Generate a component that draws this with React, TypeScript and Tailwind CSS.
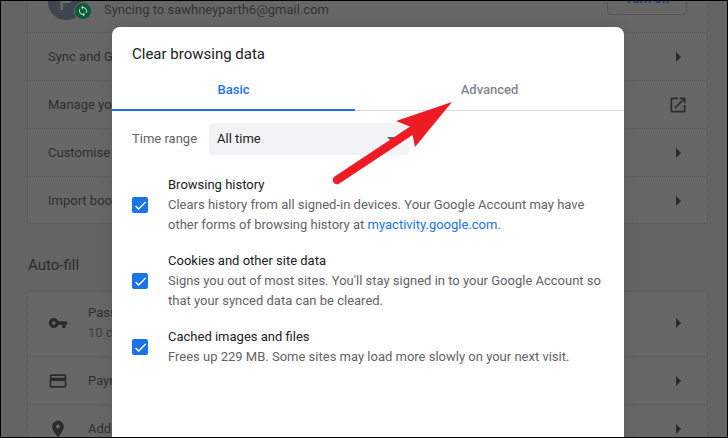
import React from "react";

const Icon = ({ d, className }: { d: string; className: string }) => (
  <svg viewBox="0 0 24 24" className={className} fill="currentColor">
    <path d={d} />
  </svg>
);

const paths = {
  key: "M12.65 10C11.83 7.67 9.61 6 7 6c-3.31 0-6 2.69-6 6s2.69 6 6 6c2.61 0 4.83-1.67 5.65-4H17v4h4v-4h2v-4H12.65zM7 14c-1.1 0-2-.9-2-2s.9-2 2-2 2 .9 2 2-.9 2-2 2z",
  card: "M20 4H4c-1.11 0-1.99.89-1.99 2L2 18c0 1.11.89 2 2 2h16c1.11 0 2-.89 2-2V6c0-1.11-.89-2-2-2zm0 14H4v-6h16v6zm0-10H4V6h16v2z",
  pin: "M12 2C8.13 2 5 5.13 5 9c0 5.25 7 13 7 13s7-7.75 7-13c0-3.87-3.13-7-7-7zm0 9.5c-1.38 0-2.5-1.12-2.5-2.5s1.12-2.5 2.5-2.5 2.5 1.12 2.5 2.5-1.12 2.5-2.5 2.5z",
  open: "M19 19H5V5h7V3H5c-1.11 0-2 .9-2 2v14c0 1.1.89 2 2 2h14c1.1 0 2-.9 2-2v-7h-2v7zM14 3v2h3.59l-9.83 9.83 1.41 1.41L19 6.41V10h2V3h-7z",
  sync: "M12 4V1L8 5l4 4V6c3.31 0 6 2.69 6 6 0 1.01-.25 1.97-.7 2.8l1.46 1.46C19.54 15.03 20 13.57 20 12c0-4.42-3.58-8-8-8zm0 14c-3.31 0-6-2.69-6-6 0-1.01.25-1.97.7-2.8L5.24 7.74C4.46 8.97 4 10.43 4 12c0 4.42 3.58 8 8 8v3l4-4-4-4v3z",
  check: "M9 16.17L4.83 12l-1.42 1.41L9 19 21 7l-1.41-1.41z",
};

const Caret = () => (
  <svg viewBox="0 0 5 10" className="w-[5px] h-[10px] text-[#2b2b2b]" fill="currentColor">
    <path d="M0 0l5 5-5 5z" />
  </svg>
);

const Row = ({ label, external }: { label: string; external?: boolean }) => (
  <div className="h-12 pl-[20px] pr-[26px] flex items-center justify-between border-t border-dotted border-[#555555]">
    <span>{label}</span>
    {external ? (
      <Icon d={paths.open} className="w-[20px] h-[20px] -mr-[7px] text-[#2b2b2b]" />
    ) : (
      <Caret />
    )}
  </div>
);

const IconRow = ({
  icon,
  label,
  sub,
  tall,
}: {
  icon: string;
  label: string;
  sub?: string;
  tall?: boolean;
}) => (
  <div
    className={`${tall ? "h-[64px] pb-[2px]" : "h-12 border-t border-dotted border-[#555555]"} pl-[20px] pr-[26px] flex items-center`}
  >
    <Icon d={icon} className="w-[20px] h-[20px] text-[#2b2b2b] mr-[20px]" />
    <div className="flex-1 leading-5">
      <div>{label}</div>
      {sub && <div className="text-[#3f3f3f]">{sub}</div>}
    </div>
    <Caret />
  </div>
);

const Option = ({ title, children }: { title: string; children: React.ReactNode }) => (
  <div className="flex items-center">
    <div className="w-[16px] h-[16px] rounded-[2px] bg-[#1a73e8] flex items-center justify-center mr-[20px]">
      <Icon d={paths.check} className="w-[15px] h-[15px] text-white" />
    </div>
    <div className="w-[440px] text-[13px] leading-5 text-[#5f6368]">
      <div className="text-[#202124]">{title}</div>
      <div>{children}</div>
    </div>
  </div>
);

export default function App() {
  return (
    <div
      className="relative w-[728px] h-[438px] overflow-hidden box-border border border-black bg-[#646464] text-[13px] text-[#2f2f2f]"
      style={{ fontFamily: "Roboto, sans-serif" }}
    >
      <div className="ml-[26px] mr-[19px] -mt-[49px]">
        <div className="h-[272px] bg-[#676767] border-x border-b border-dotted border-[#555555] rounded-b-[4px]">
          <div className="h-[80px] pl-[20px] pr-[20px] flex items-end justify-between pb-[12px]">
            <div className="flex items-center">
              <div className="relative w-[36px] h-[36px] rounded-full bg-[#3e4650] mr-[20px] flex items-center justify-center text-[24px] text-[#6b6f73]">
                P
                <div className="absolute -right-[8px] -bottom-[0px] w-[16px] h-[16px] rounded-full bg-[#0b5c38] border border-[#676767] box-content flex items-center justify-center">
                  <Icon d={paths.sync} className="w-[12px] h-[12px] text-[#c5d8cc]" />
                </div>
              </div>
              <span className="relative top-[8px] text-[#333333]">Syncing to sawhneyparth6@gmail.com</span>
            </div>
            <div className="w-[80px] h-[32px] mb-[5px] rounded-[4px] border border-[#585858] text-[#1c3a73] font-medium flex items-center justify-center">
              Turn on
            </div>
          </div>
          <Row label="Sync and Google services" />
          <Row label="Manage your Google Account" external />
          <Row label="Customise your Chrome profile" />
          <Row label="Import bookmarks and settings" />
        </div>
        <div className="pt-[32px] pb-[17px] ml-[1px] text-[15px] leading-[18px] text-[#2c2c2c]">Auto-fill</div>
        <div className="bg-[#676767] border-x border-t border-dotted border-[#555555] rounded-t-[4px]">
          <IconRow icon={paths.key} label="Passwords" sub="10 compromised passwords" tall />
          <IconRow icon={paths.card} label="Payment methods" />
          <IconRow icon={paths.pin} label="Addresses and more" />
        </div>
      </div>

      {/* dialog */}
      <div className="absolute left-[111px] top-[26px] w-[512px] h-[420px] bg-white rounded-t-[8px] shadow-[0_0_16px_rgba(0,0,0,0.12)]">
        <div className="h-[54px] pl-[20px] pt-[18px] text-[15px] leading-[18px] text-[#202124]">Clear browsing data</div>
        <div className="flex h-[30px] border-b border-[#dadce0] text-[13px] font-medium">
          <div className="w-[243px] h-[30px] border-b-2 border-[#1a73e8] text-[#1a73e8] text-center leading-[18px]">Basic</div>
          <div className="flex-1 text-[#80868b] text-center leading-[18px]">Advanced</div>
        </div>
        <div className="pl-[20px] pt-[12px]">
          <div className="flex items-center">
            <span className="w-[77px] text-[#5f6368]">Time range</span>
            <div className="w-[200px] h-[32px] rounded-[4px] bg-[#f1f3f4] pl-[8px] pr-[12px] flex items-center justify-between text-[#202124]">
              All time
              <svg viewBox="0 0 10 5" className="w-[10px] h-[5px] text-[#5f6368]" fill="currentColor">
                <path d="M0 0h10L5 5z" />
              </svg>
            </div>
          </div>
          <div className="pt-[20px] flex flex-col gap-[16px]">
            <Option title="Browsing history">
              Clears history from all signed-in devices. Your Google Account may have other forms of browsing history at{" "}
              <span className="text-[#1a73e8]">myactivity.google.com</span>.
            </Option>
            <Option title="Cookies and other site data">
              Signs you out of most sites. You'll stay signed in to your Google Account so that your synced data can be cleared.
            </Option>
            <Option title="Cached images and files">
              Frees up 229 MB. Some sites may load more slowly on your next visit.
            </Option>
          </div>
        </div>
      </div>

      {/* red arrow annotation */}
      <svg className="absolute -left-px -top-px w-[728px] h-[438px] pointer-events-none" viewBox="0 0 728 438">
        <path d="M337 180L414 129" stroke="#ed1c24" strokeWidth="8.5" strokeLinecap="round" fill="none" />
        <path d="M452 102L396 121L411 127L415 147Z" fill="#ed1c24" />
      </svg>
    </div>
  );
}
